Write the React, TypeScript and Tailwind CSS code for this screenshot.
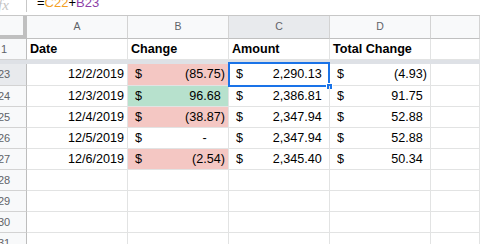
import React from "react";

type Row = {
  n: number;
  date?: string;
  change?: string;
  changeNeg?: boolean;
  fill?: string;
  amount?: string;
  total?: string;
  totalNeg?: boolean;
  h?: string;
};

const ROWS: Row[] = [
  { n: 23, date: "12/2/2019", change: "85.75", changeNeg: true, fill: "bg-[#f4c7c3]", amount: "2,290.13", total: "4.93", totalNeg: true, h: "h-[22px]" },
  { n: 24, date: "12/3/2019", change: "96.68", fill: "bg-[#b7e1cd]", amount: "2,386.81", total: "91.75" },
  { n: 25, date: "12/4/2019", change: "38.87", changeNeg: true, fill: "bg-[#f4c7c3]", amount: "2,347.94", total: "52.88" },
  { n: 26, date: "12/5/2019", change: "-", amount: "2,347.94", total: "52.88" },
  { n: 27, date: "12/6/2019", change: "2.54", changeNeg: true, fill: "bg-[#f4c7c3]", amount: "2,345.40", total: "50.34" },
  { n: 28 },
  { n: 29 },
  { n: 30 },
  { n: 31 },
];

const cell = "border-r border-b border-[#e2e3e3] flex items-center";

function Money({ value, neg, fill }: { value?: string; neg?: boolean; fill?: string }) {
  if (!value) return <div className={`${cell} ${fill ?? ""}`} />;
  let right: React.ReactNode;
  if (value === "-") {
    right = (
      <span>
        -<span className="invisible">00)</span>
      </span>
    );
  } else if (neg) {
    right = <span>({value})</span>;
  } else {
    right = (
      <span>
        {value}
        <span className="invisible">)</span>
      </span>
    );
  }
  return (
    <div className={`${cell} ${fill ?? ""} justify-between pl-[7px] pr-[3px]`}>
      <span>$</span>
      {right}
    </div>
  );
}

function RowHead({ n, active }: { n: number; active?: boolean }) {
  return (
    <div
      className={`border-r border-b border-r-[#bdbdbd] border-b-[#d3d3d3] flex items-center overflow-hidden ${
        active ? "bg-[#e8eaed]" : "bg-[#f8f9fa]"
      }`}
    >
      <div className="w-[8px] flex justify-center text-[11px] text-[#5f6368]">
        <span className="whitespace-nowrap">{n}</span>
      </div>
    </div>
  );
}

export default function App() {
  return (
    <div className="w-[480px] h-[244px] overflow-hidden bg-white text-black font-['Liberation_Sans',Arial,sans-serif]">
      <div className="h-[16px] border-b border-[#c7c7c7] flex items-start">
        <div className="w-[27px] h-[12px] border-r border-[#c7c7c7] overflow-hidden">
          <span className="block -mt-[6px] -ml-[2px] text-[15px] italic text-[#c4c4c4] font-['Liberation_Serif',serif]">
            fx
          </span>
        </div>
        <div className="pl-[10px] -mt-[5px] text-[13px] leading-[16px] whitespace-nowrap">
          =<span className="text-[#f4a022]">C22</span>+<span className="text-[#8d3fa8]">B23</span>
        </div>
      </div>

      <div className="grid grid-cols-[27px_101px_101px_101px_101px_1fr] text-[12.6px]">
        {/* column headers */}
        <div className="h-[23px] bg-[#f8f9fa] border-r-4 border-b-4 border-[#c0c0c0]" />
        {["A", "B", "C", "D", ""].map((c) => (
          <div
            key={c || "E"}
            className={`h-[23px] border-r border-b border-r-[#d3d3d3] border-b-[#c0c0c0] flex items-center justify-center text-[10.5px] text-[#5f6368] ${
              c === "C" ? "bg-[#e8eaed]" : "bg-[#f8f9fa]"
            }`}
          >
            {c}
          </div>
        ))}

        {/* frozen row 1 */}
        <RowHead n={1} />
        {["Date", "Change", "Amount", "Total Change", ""].map((t, i) => (
          <div key={i} className={`${cell} h-[21px] pl-[3px] font-bold`}>
            {t}
          </div>
        ))}

        <div className="col-span-6 h-[4px] bg-[#dee1e6]" />

        {ROWS.map((r) => (
          <React.Fragment key={r.n}>
            <div className={`${r.h ?? "h-[21px]"} grid`}>
              <RowHead n={r.n} active={r.n === 23} />
            </div>
            <div className={`${cell} justify-end pr-[3px]`}>{r.date}</div>
            <Money value={r.change} neg={r.changeNeg} fill={r.fill} />
            <div className="relative grid">
              <Money value={r.amount} />
              {r.n === 23 && (
                <>
                  <div className="absolute -left-px -top-[2px] right-0 -bottom-px border-2 border-[#1a73e8]" />
                  <div className="absolute -right-[3px] -bottom-[4px] w-[7px] h-[7px] bg-[#1a73e8] border border-white" />
                </>
              )}
            </div>
            <Money value={r.total} neg={r.totalNeg} />
            <div className={cell} />
          </React.Fragment>
        ))}
      </div>
    </div>
  );
}
